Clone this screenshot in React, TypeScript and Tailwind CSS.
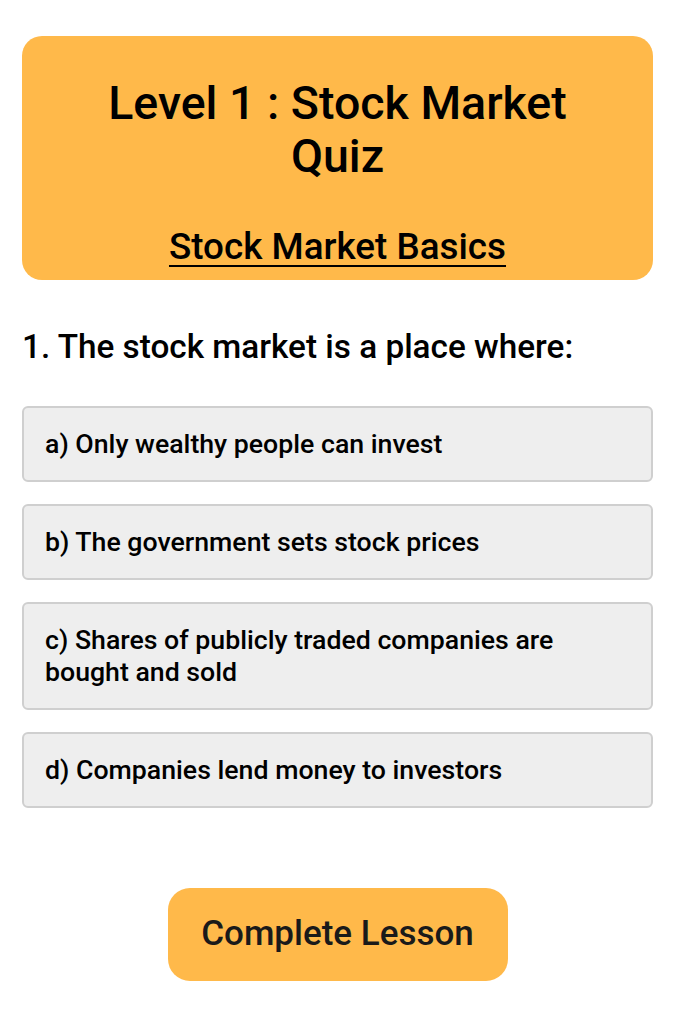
import React from "react"

const options = [
    "a) Only wealthy people can invest",
    "b) The government sets stock prices",
    "c) Shares of publicly traded companies are bought and sold",
    "d) Companies lend money to investors",
]

export default function App() {
    return (
        <div className="min-h-screen bg-white px-[22px] pt-[36px] font-['Roboto',sans-serif] text-black">
            {/* Header card */}
            <div className="flex flex-col items-center rounded-[20px] bg-[#ffb94a] px-8 pt-[41px] pb-[11px] text-center">
                <h1 className="text-[46.5px] font-medium leading-[53px]">
                    Level 1 : Stock Market
                    <br />
                    Quiz
                </h1>
                <h2 className="mt-[42px] text-[36.8px] font-medium leading-[44px] underline decoration-2 underline-offset-[6px]">
                    Stock Market Basics
                </h2>
            </div>

            {/* Question */}
            <p className="mt-[47px] text-[33.3px] font-medium leading-[40px]">
                1. The stock market is a place where:
            </p>

            <div className="mt-[39px] flex flex-col gap-[22px]">
                {options.map((opt) => (
                    <button
                        key={opt}
                        className="rounded-[6px] border-2 border-[#cfcfcf] bg-[#eeeeee] px-[21px] py-[20px] text-left text-[26.7px] font-medium leading-[32px]"
                    >
                        {opt}
                    </button>
                ))}
            </div>

            <div className="mt-[80px] flex justify-center">
                <button className="h-[93px] w-[340px] rounded-[22px] bg-[#ffb94a] text-[35px] font-medium text-[#1a1a1a]">
                    Complete Lesson
                </button>
            </div>
        </div>
    )
}
